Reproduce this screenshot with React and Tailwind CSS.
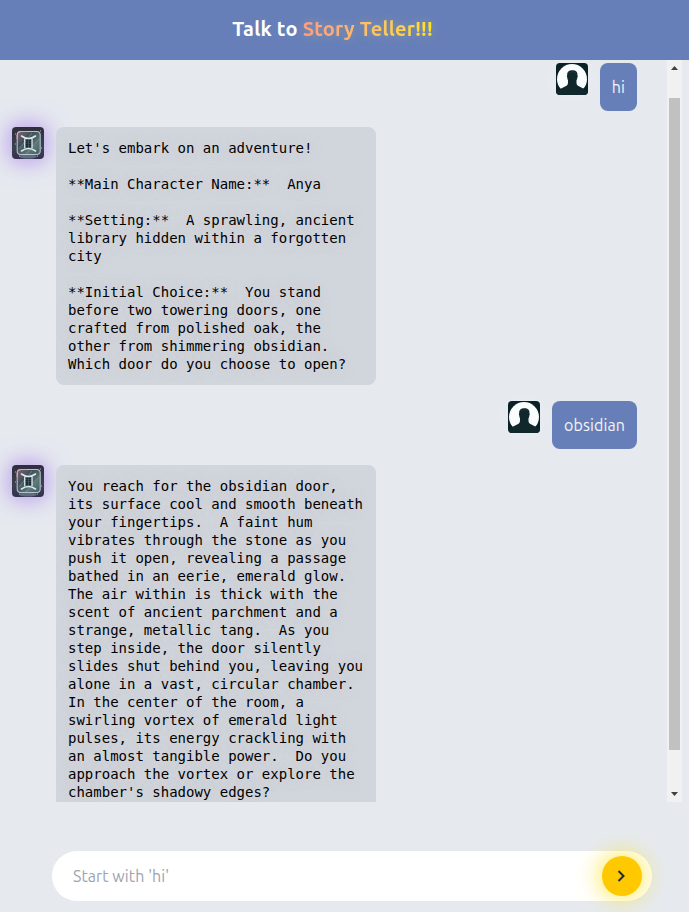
import React from "react";

function BotAvatar() {
  return (
    <div className="h-8 w-8 shrink-0 rounded shadow-[0_0_22px_3px_rgba(152,92,235,0.55)]">
      <svg viewBox="0 0 32 32" className="block h-8 w-8 rounded">
        <defs>
          <linearGradient id="tile" x1="0" y1="0" x2="0" y2="1">
            <stop offset="0" stopColor="#302e3d" />
            <stop offset="0.65" stopColor="#3b4251" />
            <stop offset="1" stopColor="#35304d" />
          </linearGradient>
          <linearGradient id="glass" x1="0" y1="0" x2="1" y2="1">
            <stop offset="0" stopColor="#806475" />
            <stop offset="0.35" stopColor="#40505b" />
            <stop offset="0.7" stopColor="#5b7779" />
            <stop offset="1" stopColor="#3f6068" />
          </linearGradient>
        </defs>
        <rect width="32" height="32" fill="url(#tile)" />
        <ellipse cx="16" cy="29.5" rx="9" ry="2" fill="#7795a3" opacity="0.6" />
        <rect x="5.2" y="4.5" width="23" height="23" rx="3.5" fill="url(#glass)" stroke="#b9c0c7" strokeWidth="1.1" />
        <path d="M5.2 12V8a3.5 3.5 0 0 1 3.5-3.5H15" fill="none" stroke="#dda3b5" strokeWidth="1" />
        <path d="M7 22 20 6M14 27 27 12" stroke="#90a9a8" strokeWidth="1" opacity="0.5" />
        <path d="M9.5 9Q16.5 14 23.5 9M9.5 24Q16.5 19 23.5 24" fill="none" stroke="#dce7e8" strokeWidth="1.6" strokeLinecap="round" />
        <path d="M12.7 11.5v9.8M20.1 11.5v9.8" stroke="#dce7e8" strokeWidth="1.2" />
        <path d="M15 12.8v7.4M17.9 12.8v7.4" stroke="#182934" strokeWidth="2.2" strokeDasharray="1.7 0.4" />
        <path d="M3 7h1M28 4h1M3 17h1M29 21h1M7 29h1M25 29h1" stroke="#a7b4c4" />
      </svg>
    </div>
  );
}

function UserAvatar() {
  return (
    <div className="h-8 w-8 shrink-0 rounded shadow-[0_0_22px_2px_rgba(255,255,255,0.14)]">
      <svg viewBox="0 0 32 32" className="block h-8 w-8 rounded">
        <rect width="32" height="32" fill="#092126" />
        <circle cx="16" cy="16" r="15" fill="#fafdfd" />
        <path d="M0 32v-3c2-.6 3.5-2 5-3.4 1.8-1.6 5.7-2.2 6.6-4.2.5-1 .4-2.7.4-4-.6-1-.7-2-.8-3.1-.5-.6-.5-1.6 0-2C11 9 12.8 7.3 16.4 7.3s5.3 1.7 5 5c.5.4.5 1.4 0 2-.1 1.1-.3 2.1-.9 3.1 0 1.3-.1 3 .4 4 .9 2 4.9 2.6 6.7 4.2 1.3 1.4 2.4 2.6 4.4 3.4v3z" fill="#10272c" />
        <path d="M12.5 10q4-3 8 0" fill="none" stroke="#293b3e" strokeWidth="0.7" />
      </svg>
    </div>
  );
}

function UserMessage({ children }) {
  return (
    <div className="flex shrink-0 justify-end gap-3 pr-[30px]">
      <UserAvatar />
      <div className="flex h-12 items-center rounded-lg bg-[#667fb9] px-3 tracking-[0.1px] whitespace-nowrap text-[#f3f4f6]">
        {children}
      </div>
    </div>
  );
}

function BotMessage({ children }) {
  return (
    <div className="flex shrink-0 items-start gap-3 pl-3">
      <BotAvatar />
      <div className="w-80 whitespace-pre-wrap rounded-lg bg-[#d1d5dc] p-3 font-['DejaVu_Sans_Mono',monospace] text-sm leading-[18px] text-black [text-shadow:0_0_12px_rgba(218,205,200,0.55)]">
        {children}
      </div>
    </div>
  );
}

const intro = `Let's embark on an adventure!

**Main Character Name:**  Anya

**Setting:**  A sprawling, ancient library hidden within a forgotten city

**Initial Choice:**  You stand before two towering doors, one crafted from polished oak, the other from shimmering obsidian.  Which door do you choose to open?`;

const chamber = "You reach for the obsidian door, its surface cool and smooth beneath your fingertips.  A faint hum vibrates through the stone as you push it open, revealing a passage bathed in an eerie, emerald glow.  The air within is thick with the scent of ancient parchment and a strange, metallic tang.  As you step inside, the door silently slides shut behind you, leaving you alone in a vast, circular chamber.  In the center of the room, a swirling vortex of emerald light pulses, its energy crackling with an almost tangible power.  Do you approach the vortex or explore the chamber's shadowy edges?";

function Scrollbar() {
  return (
    <div className="flex w-[15px] shrink-0 flex-col items-center bg-[#f1f1f1]">
      <div className="flex h-[38px] shrink-0 justify-center pt-[6px]">
        <svg width="7" height="4" viewBox="0 0 7 4"><path d="M0 4 3.5 0 7 4z" fill="#404040" /></svg>
      </div>
      <div className="h-[652px] w-[11px] shrink-0 bg-[#c1c1c1]" />
      <div className="flex flex-1 items-end pb-[6px]">
        <svg width="7" height="4" viewBox="0 0 7 4"><path d="M0 0h7L3.5 4z" fill="#404040" /></svg>
      </div>
    </div>
  );
}

export default function App() {
  return (
    <div className="flex h-[912px] w-[689px] flex-col overflow-hidden bg-[#e6eaef] font-[Ubuntu,'Noto_Sans',sans-serif]">
      <header className="flex h-[60px] shrink-0 items-center justify-center bg-[#667fb9] pr-[24px] pb-[2px]">
        <h1 className="flex whitespace-pre text-[20px] leading-7 font-bold tracking-[0.22px] text-white">
          <span>Talk to </span>
          <span className="bg-linear-to-r from-[#ff9b85] to-[#ffe319] bg-clip-text text-transparent drop-shadow-[0_0_5px_rgba(244,204,80,0.3)]">Story Teller!!!</span>
        </h1>
      </header>
      <main className="flex h-[742px] w-[682px] shrink-0 overflow-hidden">
        <section className="flex min-w-0 flex-1 flex-col gap-4 overflow-hidden pt-[3px]">
          <UserMessage>hi</UserMessage>
          <BotMessage>{intro}</BotMessage>
          <UserMessage>obsidian</UserMessage>
          <BotMessage>{chamber}</BotMessage>
        </section>
        <Scrollbar />
      </main>
      <form className="mt-[49px] ml-[52px] flex h-[50px] w-[600px] shrink-0 items-center rounded-full bg-white pr-[10px] pl-[21px]" onSubmit={(e) => e.preventDefault()}>
        <input className="min-w-0 flex-1 tracking-[0.08px] text-[#9da3af] outline-none placeholder:text-[#9da3af]" placeholder="Start with 'hi'" aria-label="Message" />
        <button className="flex h-10 w-10 shrink-0 items-center justify-center rounded-full bg-[#fec900] shadow-[0_0_24px_2px_rgba(254,222,0,0.7)]" aria-label="Send">
          <svg width="20" height="20" viewBox="0 0 20 20" fill="none"><path d="m6.5 5 5 5-5 5" stroke="#222b35" strokeWidth="2" /></svg>
        </button>
      </form>
    </div>
  );
}
